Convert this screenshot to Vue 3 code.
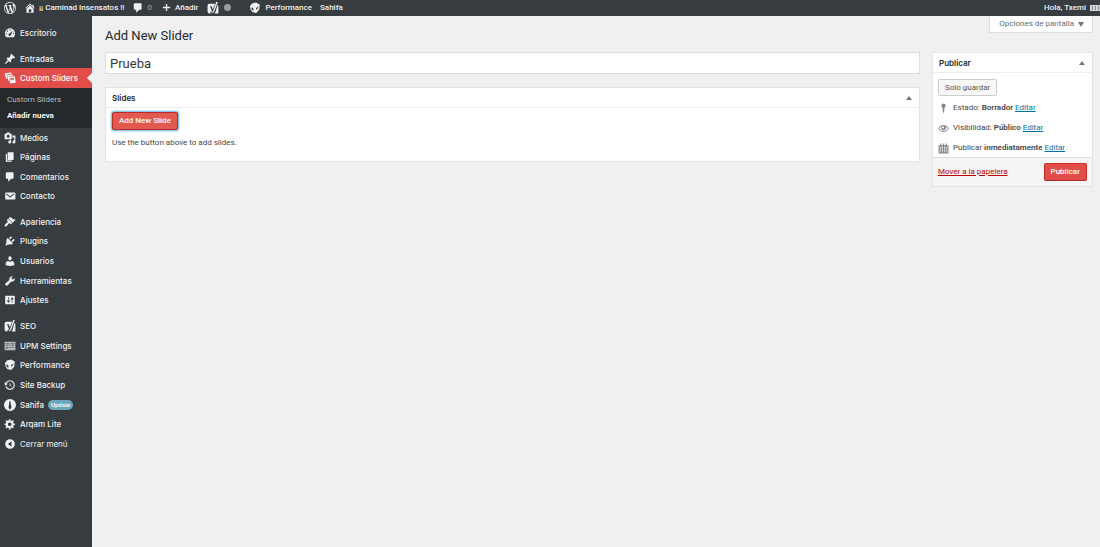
<script setup>
import { ref } from 'vue'

const icons = {
  wordpress: 'M20 10c0-5.51-4.49-10-10-10C4.48 0 0 4.49 0 10c0 5.52 4.48 10 10 10 5.51 0 10-4.48 10-10zM7.78 15.37L4.37 6.22c.55-.02 1.17-.08 1.17-.08.5-.06.44-1.13-.06-1.11 0 0-1.45.11-2.37.11-.18 0-.37 0-.58-.01C4.12 2.69 6.87 1.11 10 1.11c2.33 0 4.45.87 6.05 2.34-.68-.11-1.65.39-1.65 1.58 0 .74.45 1.36.9 2.1.35.61.55 1.36.55 2.46 0 1.49-1.4 5-1.4 5l-3.03-8.37c.54-.02.82-.17.82-.17.5-.05.44-1.25-.06-1.22 0 0-1.44.12-2.38.12-.87 0-2.33-.12-2.33-.12-.5-.03-.56 1.2-.06 1.22l.92.08 1.26 3.41zM17.41 10c.24-.64.74-1.87.43-4.25.7 1.29 1.05 2.71 1.05 4.25 0 3.29-1.73 6.24-4.4 7.78.97-2.59 1.94-5.2 2.92-7.78zM6.1 18.09C3.12 16.65 1.11 13.53 1.11 10c0-1.3.23-2.48.72-3.59C3.25 10.3 4.67 14.2 6.1 18.09zm4.03-6.63l2.58 6.98c-.86.29-1.76.45-2.71.45-.79 0-1.57-.11-2.29-.33.81-2.38 1.62-4.74 2.42-7.1z',
  home: 'M16 8.5l1.53 1.53-1.06 1.06L10 4.6l-6.47 6.47-1.06-1.06L10 2.5l4 4v-2h2v4zm-6-2.46l6 5.99V18H4v-5.97zM12 17v-5H8v5h4z',
  comment: 'M5 2h9q.82 0 1.41.59T16 4v7q0 .82-.59 1.41T14 13h-2l-5 5v-5H5q-.82 0-1.41-.59T3 11V4q0-.82.59-1.41T5 2z',
  plus: 'M8.5 2h3v6.5h6.5v3h-6.5V18h-3v-6.5H2v-3h6.5z',
  dashboard: 'M3.8 17C2.4 15.3 1.6 13.2 1.6 10.8 1.6 5.9 5.4 2 10 2s8.4 3.9 8.4 8.8c0 2.4-.8 4.5-2.2 6.2zM10 3.6a1.1 1.1 0 1 0 0 2.3 1.1 1.1 0 0 0 0-2.3zM5.7 5.5a1.1 1.1 0 1 0 0 2.3 1.1 1.1 0 0 0 0-2.3zM4 9.8A1.1 1.1 0 1 0 4 12a1.1 1.1 0 0 0 0-2.2zM16 9.8a1.1 1.1 0 1 0 0 2.2 1.1 1.1 0 0 0 0-2.2zM14.8 5.9l-5.6 5a2.1 2.1 0 1 0 2.5 2.2z',
  pin: 'M10.44 3.02l1.82-1.82 6.36 6.35-1.83 1.82c-1.05-.68-2.48-.57-3.41.36l-.75.75c-.92.93-1.04 2.35-.35 3.41l-1.83 1.82-2.41-2.41-2.8 2.79c-.42.42-3.38 2.71-3.8 2.29s1.86-3.39 2.28-3.81l2.79-2.79L4.1 9.36l1.83-1.82c1.05.69 2.48.57 3.4-.36l.75-.75c.93-.92 1.05-2.35.36-3.41z',
  slides: 'M1 2l11-1 .5 2-8 1 1 8-2-1zM5.500 5l9-1 .5 2-7 1 .5 8-1.500-1zM8.500 8l9.500-1 1.500 11-9.500 1zM10.500 10l.7 5 2.800-3 2.500 2-.5-4.500z',
  media: 'M13 11V4c0-.55-.45-1-1-1h-1.67L9 1H5L3.67 3H2c-.55 0-1 .45-1 1v7c0 .55.45 1 1 1h10c.55 0 1-.45 1-1zM7 4.5c1.38 0 2.5 1.12 2.5 2.5S8.38 9.5 7 9.5 4.5 8.38 4.5 7 5.62 4.5 7 4.5zM14 6h5v10.5c0 1.38-1.12 2.5-2.5 2.5S14 17.88 14 16.5s1.12-2.5 2.5-2.5c.17 0 .34.02.5.05V9h-3V6zm-4 8.05V13h2v3.5c0 1.38-1.12 2.5-2.5 2.5S7 17.88 7 16.5 8.12 14 9.5 14c.17 0 .34.02.5.05z',
  pages: 'M6 15V2h10v13H6zm-1 1h8v2H3V5h2v11z',
  mail: 'M19 14.5v-9c0-.83-.67-1.5-1.5-1.5H3.49c-.83 0-1.5.67-1.5 1.5v9c0 .83.67 1.5 1.5 1.5H17.5c.83 0 1.5-.67 1.5-1.5zM4.500 6l5.700 4.700L16 6l1 1-6.800 6L3.500 7z',
  brush: 'M14.48 11.06L7.41 3.99l1.5-1.5c.5-.56 2.3-.47 3.51.32 1.21.8 1.43 1.28 2.91 2.1 1.18.64 2.45 1.26 4.45.85zm-.71.71L6.7 4.7 4.93 6.47c-.39.39-.39 1.02 0 1.41l1.06 1.06c.39.39.39 1.03 0 1.42-.6.6-1.43 1.11-2.21 1.69-.35.26-.7.53-1.01.84C1.43 14.23.4 16.08 1.4 17.07c.99 1 2.84-.03 4.18-1.36.31-.31.58-.66.85-1.02.57-.78 1.08-1.61 1.69-2.21.39-.39 1.02-.39 1.41 0l1.06 1.06c.39.39 1.02.39 1.41 0z',
  plug: 'M13.11 4.36L9.87 7.6 8 5.73l3.24-3.24c.35-.34 1.05-.2 1.56.32.52.51.66 1.21.31 1.55zm-8 1.77l.91-1.12 9.01 9.01-1.19.84c-.71.71-2.63 1.16-3.82 1.16H6.14L4.9 17.26c-.59.59-1.54.59-2.12 0-.59-.58-.59-1.53 0-2.12l1.24-1.24v-3.88c0-1.13.4-3.19 1.09-3.89zm7.26 3.97l3.24-3.24c.34-.35 1.04-.21 1.55.31.52.51.66 1.21.31 1.55l-3.24 3.25z',
  user: 'M10 9.25c-2.27 0-2.73-3.44-2.73-3.44C7 4.02 7.82 2 9.97 2c2.16 0 2.98 2.02 2.71 3.81 0 0-.41 3.44-2.68 3.44zm0 2.57L12.72 10c2.39 0 4.52 2.33 4.52 4.53v2.49s-3.65 1.13-7.24 1.13c-3.65 0-7.24-1.13-7.24-1.13v-2.49c0-2.25 1.94-4.48 4.47-4.48z',
  wrench: 'M16.68 9.77c-1.34 1.34-3.3 1.67-4.95.99l-5.41 6.52c-.99.99-2.59.99-3.58 0s-.99-2.59 0-3.57l6.52-5.42c-.68-1.65-.35-3.61.99-4.95 1.28-1.28 3.12-1.62 4.72-1.06l-2.89 2.89 2.82 2.82 2.86-2.87c.53 1.58.18 3.39-1.08 4.65z',
  sliders: 'M18 16V4c0-.55-.45-1-1-1H3c-.55 0-1 .45-1 1v12c0 .55.45 1 1 1h14c.55 0 1-.45 1-1zM8 11h1c.55 0 1 .45 1 1s-.45 1-1 1H8v1.5c0 .28-.22.5-.5.5s-.5-.22-.5-.5V13H6c-.55 0-1-.45-1-1s.45-1 1-1h1V5.5c0-.28.22-.5.5-.5s.5.22.5.5V11zm5-2h-1c-.55 0-1-.45-1-1s.45-1 1-1h1V5.5c0-.28.22-.5.5-.5s.5.22.5.5V7h1c.55 0 1 .45 1 1s-.45 1-1 1h-1v5.5c0 .28-.22.5-.5.5s-.5-.22-.5-.5V9z',
  yoast: 'M4 3h9.5L9.6 12.4 7.8 7H5l3.3 8.2c-.5 1.2-1.2 1.7-2.6 1.8v2H4c-1.700 0-3-1.300-3-3V6c0-1.700 1.300-3 3-3zM15.300 0H18l-5.600 15.200c-.9 2.300-2 3.500-4.400 3.800v-1.400c1-.3 1.600-1 2-2.200zM17.300 5c.9.500 1.700 1.500 1.700 2.600V19h-6.500c1-1 1.500-2 2-3.300z',
  panel: 'M1 3h18v14H1zM3 6v1h6V6zM11 6v1h6V6zM3 9v1h4V9zM9 9v1h2V9zM13 9v1h4V9zM3 12v2h3v-2zM8 12v1h9v-1z',
  cube: 'M1.500 7L5 2.500 11.500 1 18 4l-1 9-5 5.500-6.500-2L2.500 12zM3.500 9l1.500 4.500 2.500 1L7 10zM12 10l-.5 3.500 3.500-3 .5-3z',
  backup: 'M13.65 2.88c3.93 2.01 5.48 6.84 3.47 10.77s-6.83 5.48-10.77 3.47c-1.87-.96-3.2-2.56-3.86-4.4l1.64-1.03c.45 1.57 1.52 2.95 3.08 3.76 3.01 1.54 6.69.35 8.23-2.66 1.55-3.01.36-6.69-2.65-8.24C9.78 3.01 6.1 4.2 4.56 7.21l1.88.97-4.95 3.08-.39-5.82 1.78.91C4.9 2.4 9.75.89 13.65 2.88zm-4.36 7.83C9.11 10.53 9 10.28 9 10c0-.07.03-.12.04-.19h-.01L10 5l.97 4.81L14 13l-4.5-2.12.02-.02c-.08-.04-.16-.09-.23-.15z',
  tie: 'M10 0a10 10 0 1 0 0 20 10 10 0 0 0 0-20zM8.500 4h3l-.4 3 1.400 7-2.500 4-2.500-4 1.400-7z',
  gear: 'M18 12h-2.18c-.17.7-.44 1.35-.81 1.93l1.54 1.54-2.1 2.1-1.54-1.54c-.58.36-1.23.63-1.91.79V19H8v-2.18c-.68-.16-1.33-.43-1.91-.79l-1.54 1.54-2.12-2.12 1.54-1.54c-.36-.58-.63-1.23-.79-1.91H1V9.03h2.17c.16-.7.44-1.35.8-1.94L2.43 5.55l2.1-2.1 1.54 1.54c.58-.37 1.24-.64 1.93-.81V2h3v2.18c.68.16 1.33.43 1.91.79l1.54-1.54 2.12 2.12-1.54 1.54c.36.59.64 1.24.8 1.94H18V12zm-8.5 1.5c1.66 0 3-1.34 3-3s-1.34-3-3-3-3 1.34-3 3 1.34 3 3 3z',
  collapse: 'M10 2a8 8 0 1 0 0 16 8 8 0 0 0 0-16zM12.5 5.500v9L6.500 10z',
  marker: 'M10 1a4 4 0 0 1 1.500 7.700V14L10 19l-1.500-5V8.700A4 4 0 0 1 10 1z',
  eye: 'M10 3.500c4 0 7.500 2.500 9.500 6.500-2 4-5.500 6.500-9.500 6.500S2.500 14 .5 10c2-4 5.500-6.500 9.500-6.500zM6.300 6.100C4.600 7 3.300 8.400 2.300 10c1.700 3 4.500 5 7.700 5s6-2 7.700-5c-1-1.600-2.300-3-4-3.900a4.600 4.600 0 1 1-7.400 0zM9 6a2 2 0 1 0 0 4 2 2 0 0 0 0-4z',
  calendar: 'M4 1h2v3h3V1h2v3h3V1h2v3h3v15H1V4h3zM3 7v3h2V7zM7 7v3h2V7zM11 7v3h2V7zM15 7v3h2V7zM3 11.500v2h2v-2zM7 11.500v2h2v-2zM11 11.500v2h2v-2zM15 11.500v2h2v-2zM3 15v2h2v-2zM7 15v2h2v-2zM11 15v2h2v-2zM15 15v2h2v-2z'
}

const groups = [
  { id: 'start', items: [{ label: 'Escritorio', icon: 'dashboard' }] },
  { id: 'posts', items: [{ label: 'Entradas', icon: 'pin' }, { label: 'Custom Sliders', icon: 'slides', current: true }] },
  { id: 'library', items: [
    { label: 'Medios', icon: 'media' }, { label: 'Páginas', icon: 'pages' },
    { label: 'Comentarios', icon: 'comment' }, { label: 'Contacto', icon: 'mail' }
  ] },
  { id: 'system', items: [
    { label: 'Apariencia', icon: 'brush' }, { label: 'Plugins', icon: 'plug' }, { label: 'Usuarios', icon: 'user' },
    { label: 'Herramientas', icon: 'wrench' }, { label: 'Ajustes', icon: 'sliders' }
  ] },
  { id: 'extras', items: [
    { label: 'SEO', icon: 'yoast' }, { label: 'UPM Settings', icon: 'panel', dim: true }, { label: 'Performance', icon: 'cube' },
    { label: 'Site Backup', icon: 'backup' }, { label: 'Sahifa', icon: 'tie', badge: 'Update' },
    { label: 'Arqam Lite', icon: 'gear' }, { label: 'Cerrar menú', icon: 'collapse', button: true }
  ] }
]

const statuses = [
  { icon: 'marker', label: 'Estado:', value: 'Borrador' },
  { icon: 'eye', label: 'Visibilidad:', value: 'Público' },
  { icon: 'calendar', label: 'Publicar', value: 'inmediatamente' }
]

const title = ref('Prueba')
</script>

<template>
  <div class="admin">
    <header class="bar">
      <a href="#" class="logo" aria-label="WordPress"><svg class="icon" viewBox="0 0 20 20"><path :d="icons.wordpress" /></svg></a>
      <a href="#" class="site"><svg class="icon" viewBox="0 0 20 20"><path fill-rule="evenodd" :d="icons.home" /></svg>¡¡ Caminad Insensatos !!</a>
      <a href="#" class="count"><svg class="icon" viewBox="0 0 20 20"><path :d="icons.comment" /></svg><span>0</span></a>
      <a href="#" class="new"><svg class="icon small" viewBox="0 0 20 20"><path :d="icons.plus" /></svg>Añadir</a>
      <a href="#" class="seo" aria-label="SEO"><svg class="icon" viewBox="0 0 20 20"><path fill-rule="evenodd" :d="icons.yoast" /></svg><i class="dot"></i></a>
      <a href="#" class="perf"><svg class="icon" viewBox="0 0 20 20"><path fill-rule="evenodd" :d="icons.cube" /></svg>Performance</a>
      <a href="#">Sahifa</a>
      <a href="#" class="account">Hola, Txemi<svg class="avatar" viewBox="0 0 10 6"><path fill="#d5d5d5" d="M0 0h10v6H0z" /><path fill="#888b8e" d="M2 1h1v4H2zM5 1h1v4H5zM8 1h1v4H8z" /></svg></a>
    </header>

    <div class="body">
      <nav class="menu">
        <ul v-for="group in groups" :key="group.id" :class="group.id">
          <li v-for="item in group.items" :key="item.label">
            <component
              :is="item.button ? 'button' : 'a'"
              :href="item.button ? undefined : '#'"
              class="entry"
              :class="{ current: item.current, muted: item.button }"
            >
              <svg class="icon" :class="{ dim: item.dim }" viewBox="0 0 20 20"><path fill-rule="evenodd" :d="icons[item.icon]" /></svg>
              <span>{{ item.label }}</span>
              <span v-if="item.badge" class="badge">{{ item.badge }}</span>
            </component>
            <div v-if="item.current" class="submenu">
              <a href="#">Custom Sliders</a>
              <a href="#" class="active">Añadir nueva</a>
            </div>
          </li>
        </ul>
      </nav>

      <main>
        <div class="top">
          <h1>Add New Slider</h1>
          <button class="options">Opciones de pantalla <span class="arrow down"></span></button>
        </div>
        <div class="columns">
          <div class="primary">
            <input v-model="title" class="title" type="text" aria-label="Título">
            <section class="box">
              <h2>Slides <button class="toggle" aria-label="Slides"><span class="arrow"></span></button></h2>
              <div class="slides">
                <button class="red focused">Add New Slide</button>
                <p>Use the button above to add slides.</p>
              </div>
            </section>
          </div>
          <aside class="box">
            <h2>Publicar <button class="toggle" aria-label="Publicar"><span class="arrow"></span></button></h2>
            <div class="publish">
              <button class="plain">Solo guardar</button>
              <div class="statuses">
                <p v-for="status in statuses" :key="status.icon">
                  <svg class="icon" viewBox="0 0 20 20"><path fill-rule="evenodd" :d="icons[status.icon]" /></svg>
                  <span>{{ status.label }} <b>{{ status.value }}</b> <a href="#">Editar</a></span>
                </p>
              </div>
            </div>
            <footer>
              <a href="#" class="trash">Mover a la papelera</a>
              <button class="red">Publicar</button>
            </footer>
          </aside>
        </div>
      </main>
    </div>
  </div>
</template>

<style>
body {
  margin: 0;
  background: #f0f0f0;
}
</style>

<style scoped>
* {
  box-sizing: border-box;
}
.admin {
  display: flex;
  flex-direction: column;
  min-height: 100vh;
  color: #444;
  font: 8px/12px Roboto, "Liberation Sans", sans-serif;
}
button {
  margin: 0;
  font: inherit;
  cursor: pointer;
}
p, ul, h1, h2 {
  margin: 0;
  padding: 0;
}
.icon {
  width: 12px;
  height: 12px;
  flex: none;
  fill: currentColor;
}
.icon.small {
  width: 9px;
  height: 9px;
}

.bar {
  display: flex;
  align-items: center;
  height: 16px;
  padding: 0 0 1px 4px;
  background: #373c40;
  color: #f0f0f0;
  font-weight: 500;
}
.bar a {
  display: flex;
  align-items: center;
  gap: 4px;
  color: inherit;
  text-decoration: none;
  white-space: nowrap;
}
.logo { margin-right: 8px; }
.bar .site { gap: 3px; margin-right: 7px; }
.count { margin-right: 10px; }
.count span { color: #a5a8aa; font-weight: 400; }
.new { margin-right: 9px; }
.bar .seo { gap: 5px; margin-right: 18px; }
.perf { margin-right: 8px; }
.bar .account { margin-left: auto; }
.dot {
  width: 7px;
  height: 7px;
  border-radius: 50%;
  background: #999c9e;
}
.avatar {
  width: 10px;
  height: 6px;
}

.body {
  display: flex;
  flex: 1;
}
.menu {
  display: flex;
  flex-direction: column;
  gap: 6px;
  width: 92px;
  flex: none;
  padding-top: 7px;
  background: #373c40;
  font-family: Inter, "Liberation Sans", sans-serif;
}
.menu ul {
  display: grid;
  list-style: none;
}
.start { height: 20px; }
.posts { margin-bottom: -6px; }
.library { grid-auto-rows: 1fr; height: 78px; }
.system { grid-auto-rows: 1fr; height: 98px; }
.extras { grid-auto-rows: 1fr; height: 138px; }
.menu li {
  display: flex;
  flex-direction: column;
}
.entry {
  display: flex;
  align-items: center;
  gap: 4px;
  width: 100%;
  height: 100%;
  min-height: 19px;
  padding: 0 0 0 4px;
  border: 0;
  background: none;
  color: #f0f0f0;
  font-weight: 500;
  text-decoration: none;
  white-space: nowrap;
}
.entry.muted {
  font-weight: 400;
}
.icon.dim {
  opacity: .7;
}
.entry.current {
  position: relative;
  height: 20px;
  background: #e14d48;
  color: #fff;
}
.entry.current::after {
  content: "";
  position: absolute;
  top: 5px;
  right: 0;
  border: 5px solid transparent;
  border-left-width: 0;
  border-right: 5px solid #f0f0f0;
}
.submenu {
  display: flex;
  flex-direction: column;
  gap: 4px;
  padding: 6px 7px;
  background: #25292c;
  font-family: Roboto, "Liberation Sans", sans-serif;
}
.submenu a {
  color: #bbbdbf;
  text-decoration: none;
}
.submenu a.active {
  color: #fff;
  font-weight: 600;
}
.badge {
  padding: 0 3px;
  border-radius: 5px;
  background: #69a8bb;
  color: #fff;
  font: 500 6px/10px Roboto, "Liberation Sans", sans-serif;
}

main {
  flex: 1;
  min-width: 0;
  padding: 0 7px 0 13px;
}
.top {
  display: flex;
  justify-content: space-between;
  align-items: flex-start;
  height: 36px;
}
h1 {
  padding-top: 11px;
  color: #23282d;
  font-size: 13px;
  font-weight: 400;
  line-height: 18px;
}
.options {
  display: flex;
  align-items: center;
  gap: 4px;
  height: 17px;
  padding: 0 8px 0 9px;
  border: 1px solid #ddd;
  border-top: 0;
  background: #fff;
  color: #666b70;
}
.arrow {
  width: 0;
  border: 3px solid transparent;
  border-top: 0;
  border-bottom: 4px solid #72777c;
}
.arrow.down {
  border: 3px solid transparent;
  border-bottom: 0;
  border-top: 5px solid #72777c;
}
.columns {
  display: flex;
  align-items: flex-start;
  gap: 12px;
}
.primary {
  display: flex;
  flex: 1;
  flex-direction: column;
  gap: 13px;
  min-width: 0;
}
.title {
  width: 100%;
  height: 22px;
  padding: 0 4px;
  border: 1px solid #ddd;
  outline: 0;
  background: #fff;
  color: #32373c;
  font: 13px/18px Roboto, "Liberation Sans", sans-serif;
}
.box {
  border: 1px solid #e3e3e3;
  background: #fff;
}
aside {
  width: 161px;
  flex: none;
}
h2 {
  display: flex;
  align-items: center;
  justify-content: space-between;
  height: 20px;
  padding: 0 6px;
  border-bottom: 1px solid #eee;
  color: #23282d;
  font: 600 8px/12px Inter, "Liberation Sans", sans-serif;
}
.toggle {
  display: flex;
  padding: 1px;
  border: 0;
  background: none;
}
.slides {
  padding: 4px 6px 12px;
}
.slides p {
  margin-top: 7px;
}
.red, .plain {
  height: 18px;
  padding: 0 6px;
  border: 1px solid #ccc;
  border-radius: 2px;
  background: #f7f7f7;
  color: #555;
}
.plain {
  align-self: flex-start;
  height: 17px;
}
.red {
  border-color: #d02c27 #ba2b26 #b12a25;
  background: #e14d48;
  color: #fff;
  font-weight: 500;
}
.red.focused {
  border-color: #b92b27;
  background: #e35950;
  box-shadow: 0 0 2px 1px #5bb5dc;
}
.publish {
  display: flex;
  flex-direction: column;
  gap: 6px;
  padding: 6px 5px 3px;
}
.statuses {
  display: flex;
  flex-direction: column;
  gap: 8px;
}
.statuses p {
  display: flex;
  align-items: center;
  gap: 4px;
  white-space: nowrap;
}
.statuses .icon {
  width: 11px;
  height: 11px;
  color: #82878c;
}
.statuses b {
  font-weight: 600;
}
.statuses a {
  color: #0073aa;
}
footer {
  display: flex;
  align-items: center;
  justify-content: space-between;
  height: 29px;
  padding: 0 5px;
  border-top: 1px solid #ddd;
  background: #f5f5f5;
}
.trash {
  color: #b00;
}
</style>
